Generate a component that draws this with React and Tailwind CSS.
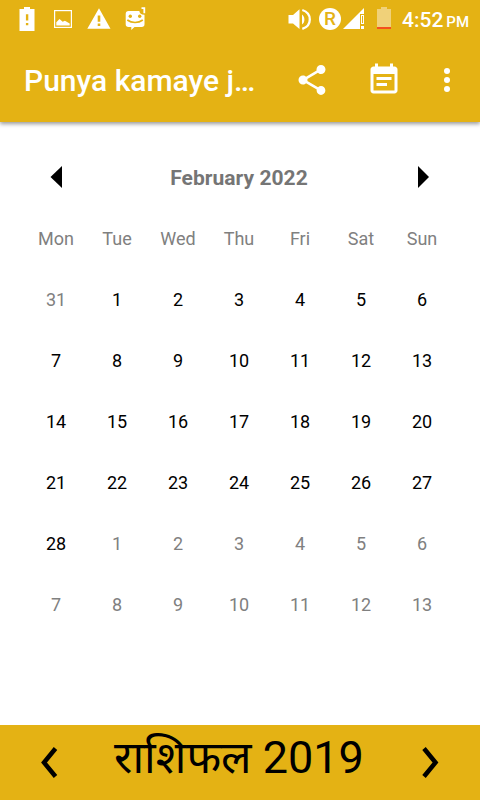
import React from "react";

const weekDays = ["Mon", "Tue", "Wed", "Thu", "Fri", "Sat", "Sun"];

// 31 Jan 2022 is the first visible cell
const days = Array.from({ length: 42 }, (_, i) => {
    const date = new Date(2022, 0, 31 + i);
    return { key: i, day: date.getDate(), current: date.getMonth() === 1 };
});

function StatusBar() {
    return (
        <div className="flex h-[38px] items-start text-white">
            <svg className="ml-[19px] mt-[7px] h-6 w-4 shrink-0" viewBox="0 0 16 24" fill="currentColor">
                <path
                    fillRule="evenodd"
                    d="M5 0h6v2h4.500v22H.5V2H5zM6.900 7.300v6.200h2.400V7.300zM6.900 16v2.300h2.400V16z"
                />
            </svg>
            <svg className="ml-[19px] mt-[10px] h-[18px] w-[18px] shrink-0" viewBox="0 0 18 18">
                <rect x=".6" y=".6" width="16.800" height="16.800" fill="none" stroke="currentColor" strokeWidth="1.200" />
                <path d="M2.300 15.500v-3.200l3.200-3.200 3.200 2.700 2.200-1 4.800 2.700v2z" fill="currentColor" />
            </svg>
            <svg className="ml-[15px] mt-[8px] h-[21px] w-6 shrink-0" viewBox="0 0 24 21" fill="currentColor">
                <path fillRule="evenodd" d="M12 .2 23.500 20.800H.3zM10.700 7.500v6.300h2.600V7.500zM10.700 15.500v2.500h2.600v-2.500z" />
            </svg>
            <svg className="ml-[14px] mt-[7px] h-[23px] w-[21px] shrink-0" viewBox="0 0 21 23">
                <path
                    d="M3.500 4h10.800c.3 2.300 1.700 3.800 5.200 3.800v9.400c0 1.800-1 2.800-2.800 2.800H9.500l-3.200 3v-3H3.500C1.700 20 .7 19 .7 17.200V7C.7 5 1.700 4 3.500 4z"
                    fill="currentColor"
                />
                <path d="M16.500 1.200h2.800v5" fill="none" stroke="currentColor" strokeWidth="1.800" />
                <circle cx="5.300" cy="9.300" r="1.700" fill="#e4b214" />
                <circle cx="14.700" cy="9.300" r="1.700" fill="#e4b214" />
                <path d="M2.300 13c4.500 3.300 11 3.300 15.500 0" fill="none" stroke="#e4b214" strokeWidth="1.600" />
            </svg>

            <svg className="ml-[142px] mt-[8px] h-[23px] w-6 shrink-0" viewBox="0 0 24 23" fill="none" stroke="currentColor">
                <path d="M.5 7h4.500L11.500 1.300v19.700L5 15.500H.5z" fill="currentColor" stroke="none" />
                <path d="M14 6.500c3.200 2.200 3.200 8 0 10" fill="currentColor" stroke="none" />
                <path d="M14.300 2c10 3.200 10 15.700 0 18.900" strokeWidth="2.300" />
            </svg>
            <span className="ml-[7px] mt-[8px] flex h-[22px] w-[22px] shrink-0 items-center justify-center rounded-full bg-white pb-px text-[19px] font-medium leading-none text-[#e4b214]">
                R
            </span>
            <svg className="ml-[2px] mt-[8px] h-[21px] w-[21px] shrink-0" viewBox="0 0 21 21" fill="currentColor">
                <path d="M0 21 21 0v6h-4v15z" />
                <path d="M18 7h3v9h-3zM18 18h3v3h-3z" />
                <path d="M19 8h1v7h-1z" fill="#e4b214" />
            </svg>
            <svg className="ml-[13px] mt-[7px] h-[22px] w-[14px] shrink-0" viewBox="0 0 14 22">
                <path d="M4 0h6v2h4v18H0V2h4z" fill="#f0d179" />
                <path d="M0 20h14v2H0z" fill="#f4511e" />
            </svg>
            <span className="ml-[11px] mt-[5px] whitespace-nowrap text-[21px] font-medium leading-[30px]">
                4:52<span className="ml-[3px] text-[15px]">PM</span>
            </span>
        </div>
    );
}

function Toolbar() {
    return (
        <div className="flex h-[84px] items-center pl-6 text-white">
            <h1 className="w-[270px] whitespace-nowrap pt-px text-[30px] font-medium leading-9">
                Punya kamaye j…
            </h1>
            <svg className="h-9 w-9 shrink-0" viewBox="0 0 24 24" fill="currentColor">
                <path d="M18 16.080c-.76 0-1.440.3-1.960.77L8.910 12.700c.05-.23.09-.46.09-.7s-.04-.47-.09-.7l7.050-4.110c.54.5 1.250.81 2.040.81 1.660 0 3-1.340 3-3s-1.340-3-3-3-3 1.340-3 3c0 .24.04.47.09.7L8.040 9.810C7.500 9.310 6.790 9 6 9c-1.660 0-3 1.340-3 3s1.340 3 3 3c.79 0 1.500-.31 2.040-.81l7.120 4.160c-.05.21-.08.43-.08.65 0 1.610 1.310 2.920 2.920 2.920s2.920-1.310 2.920-2.920-1.310-2.920-2.920-2.920z" />
            </svg>
            <svg className="ml-9 h-9 w-9 shrink-0" viewBox="0 0 24 24" fill="currentColor">
                <path d="M17 10H7v2h10v-2zm2-7h-1V1h-2v2H8V1H6v2H5c-1.110 0-1.990.9-1.990 2L3 19c0 1.100.89 2 2 2h14c1.100 0 2-.9 2-2V5c0-1.100-.9-2-2-2zm0 16H5V8h14v11zm-5-5H7v2h7v-2z" />
            </svg>
            <svg className="ml-[27px] h-9 w-9 shrink-0" viewBox="0 0 24 24" fill="currentColor">
                <circle cx="12" cy="6" r="2" />
                <circle cx="12" cy="12" r="2" />
                <circle cx="12" cy="18" r="2" />
            </svg>
        </div>
    );
}

function Calendar() {
    return (
        <main className="flex-1 pl-[25.5px] pt-[25px]">
            <div className="flex h-[61px] w-[427px] items-center justify-between pl-[24.5px] pr-[23.5px]">
                <svg className="mb-0.5 h-[22px] w-[12px]" viewBox="0 0 12 22">
                    <path d="M12 0v22L.5 11z" />
                </svg>
                <h2 className="pr-[2px] pt-[2px] text-[21px] font-bold tracking-[0.05px] text-[#757575]">
                    February 2022
                </h2>
                <svg className="mb-0.5 h-[22px] w-[11px]" viewBox="0 0 11 22">
                    <path d="M0 0v22l11-11z" />
                </svg>
            </div>
            <div className="grid w-[427px] grid-cols-7 text-center text-[18px] leading-[61px]">
                {weekDays.map((name) => (
                    <div key={name} className="text-[#808080]">
                        {name}
                    </div>
                ))}
                {days.map(({ key, day, current }) => (
                    <div key={key} className={current ? "text-black" : "text-[#808080]"}>
                        {day}
                    </div>
                ))}
            </div>
        </main>
    );
}

function Footer() {
    return (
        <footer className="flex h-[75px] items-start bg-[#e4b214] text-black">
            <svg className="ml-[41px] mt-[21px] h-8 w-[17px] shrink-0" viewBox="0 0 17 32" fill="none" stroke="currentColor" strokeWidth="4.500">
                <path d="M14.500 2.500 3 16.500l11.500 14" />
            </svg>
            <div className="mt-[5px] flex-1 whitespace-nowrap pr-[2px] text-center text-[45px] leading-[56px]">
                राशिफल 2019
            </div>
            <svg className="mr-[41px] mt-[21px] h-8 w-[17px] shrink-0" viewBox="0 0 17 32" fill="none" stroke="currentColor" strokeWidth="4.500">
                <path d="m2 2.500 11.500 14L2 30.500" />
            </svg>
        </footer>
    );
}

export default function App() {
    return (
        <div className="flex h-[800px] w-[480px] flex-col overflow-hidden bg-white font-['Roboto','Noto_Sans_Devanagari','Noto_Sans',sans-serif]">
            <header className="bg-[#e4b214] shadow-[0_2px_4px_rgba(0,0,0,0.4)]">
                <StatusBar />
                <Toolbar />
            </header>
            <Calendar />
            <Footer />
        </div>
    );
}
